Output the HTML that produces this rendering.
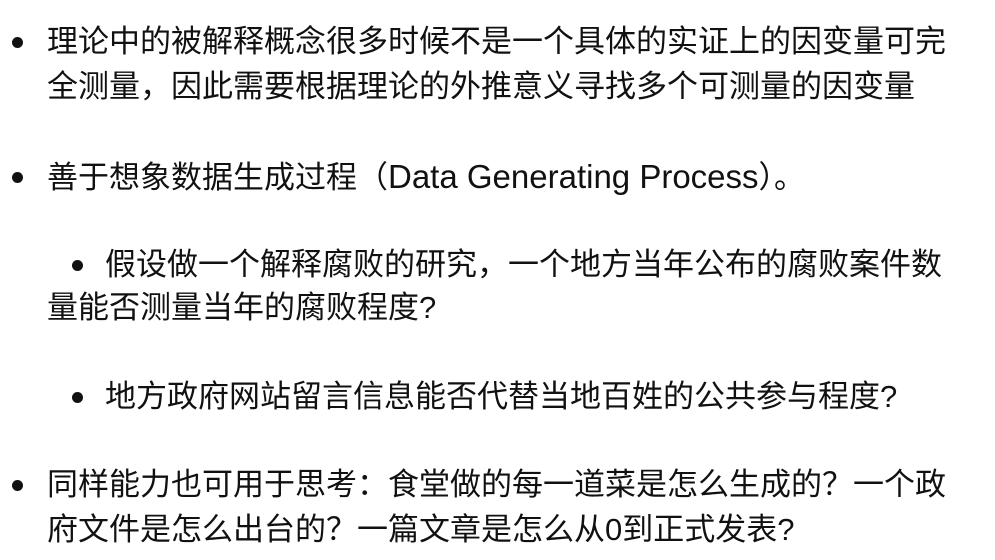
<!DOCTYPE html>
<html><head><meta charset="utf-8"><style>
html,body{margin:0;padding:0;background:#fff;width:995px;height:560px;overflow:hidden}
body{font-family:"Liberation Sans","Noto Sans CJK SC",sans-serif;font-size:31px;color:#111}
.l{position:absolute;left:47px;white-space:nowrap;line-height:44px}
.b{position:absolute;width:11px;height:11px;border-radius:50%;background:#111}
.en{font-size:33px}
</style></head><body>
<div class="b" style="left:12px;top:37px"></div>
<div class="l" style="top:20px">理论中的被解释概念很多时候不是一个具体的实证上的因变量可完</div>
<div class="l" style="top:65px">全测量，因此需要根据理论的外推意义寻找多个可测量的因变量</div>
<div class="b" style="left:12px;top:172px"></div>
<div class="l" style="top:155px">善于想象数据生成过程（<span class="en">Data Generating Process</span>）。</div>
<div class="b" style="left:72px;top:260px"></div>
<div class="l" style="top:243px;left:105px">假设做一个解释腐败的研究，一个地方当年公布的腐败案件数</div>
<div class="l" style="top:286px">量能否测量当年的腐败程度?</div>
<div class="b" style="left:72px;top:392px"></div>
<div class="l" style="top:375px;left:105px">地方政府网站留言信息能否代替当地百姓的公共参与程度?</div>
<div class="b" style="left:12px;top:480px"></div>
<div class="l" style="top:463px">同样能力也可用于思考：食堂做的每一道菜是怎么生成的？一个政</div>
<div class="l" style="top:508px">府文件是怎么出台的？一篇文章是怎么从0到正式发表?</div>
</body></html>
